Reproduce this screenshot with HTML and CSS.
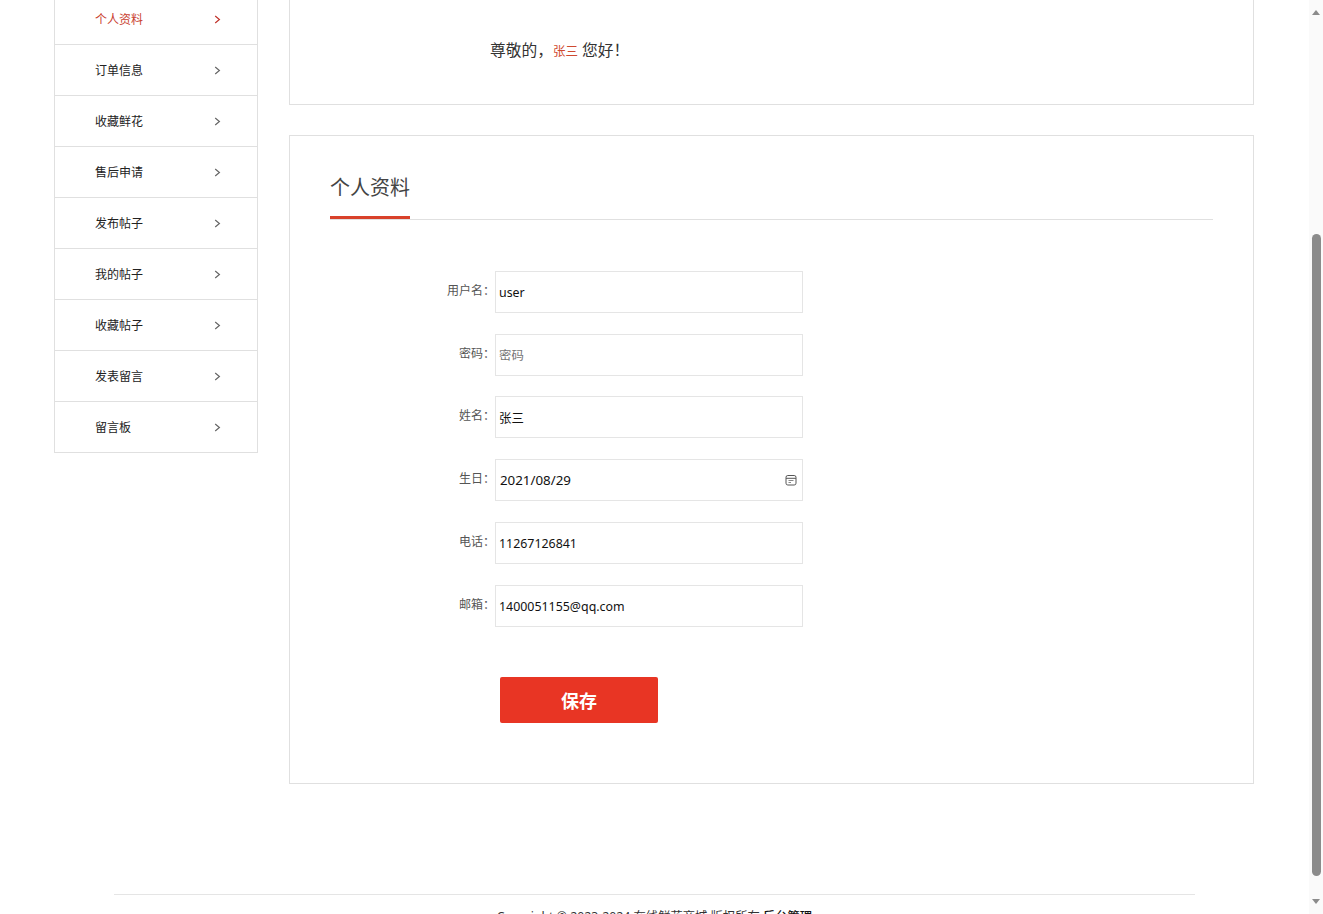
FILE: index.html
```html
<!DOCTYPE html>
<html lang="zh-CN">
<head>
<meta charset="utf-8">
<title>个人资料</title>
<link rel="stylesheet" href="styles.css">
</head>
<body>
<div class="page">
  <div class="layout">
    <nav class="side">
      <a class="side-item active"><span>个人资料</span><svg class="chev" width="7" height="9" viewBox="0 0 7 9"><path d="M1.2 1 L5.4 4.5 L1.2 8"/></svg></a>
      <a class="side-item"><span>订单信息</span><svg class="chev" width="7" height="9" viewBox="0 0 7 9"><path d="M1.2 1 L5.4 4.5 L1.2 8"/></svg></a>
      <a class="side-item"><span>收藏鲜花</span><svg class="chev" width="7" height="9" viewBox="0 0 7 9"><path d="M1.2 1 L5.4 4.5 L1.2 8"/></svg></a>
      <a class="side-item"><span>售后申请</span><svg class="chev" width="7" height="9" viewBox="0 0 7 9"><path d="M1.2 1 L5.4 4.5 L1.2 8"/></svg></a>
      <a class="side-item"><span>发布帖子</span><svg class="chev" width="7" height="9" viewBox="0 0 7 9"><path d="M1.2 1 L5.4 4.5 L1.2 8"/></svg></a>
      <a class="side-item"><span>我的帖子</span><svg class="chev" width="7" height="9" viewBox="0 0 7 9"><path d="M1.2 1 L5.4 4.5 L1.2 8"/></svg></a>
      <a class="side-item"><span>收藏帖子</span><svg class="chev" width="7" height="9" viewBox="0 0 7 9"><path d="M1.2 1 L5.4 4.5 L1.2 8"/></svg></a>
      <a class="side-item"><span>发表留言</span><svg class="chev" width="7" height="9" viewBox="0 0 7 9"><path d="M1.2 1 L5.4 4.5 L1.2 8"/></svg></a>
      <a class="side-item"><span>留言板</span><svg class="chev" width="7" height="9" viewBox="0 0 7 9"><path d="M1.2 1 L5.4 4.5 L1.2 8"/></svg></a>
    </nav>
    <main class="main">
      <section class="card greet">
        <p class="greet-text">尊敬的，<span class="greet-name">张三</span> 您好！</p>
      </section>
      <section class="card profile">
        <div class="tab-head"><h2 class="tab-title">个人资料</h2></div>
        <form class="form">
          <div class="row"><label class="label">用户名：</label><input class="field" type="text" value="user"></div>
          <div class="row"><label class="label">密码：</label><input class="field" type="password" placeholder="密码"></div>
          <div class="row"><label class="label">姓名：</label><input class="field" type="text" value="张三"></div>
          <div class="row"><label class="label">生日：</label>
            <div class="date-wrap">
              <input class="field field-date" type="text" value="2021/08/29">
              <svg class="cal" width="12" height="12" viewBox="0 0 12 12"><rect x="1" y="1.5" width="10" height="9.5" rx="1.8"/><path d="M1 4.3 H11"/><path class="cal-dots" d="M3.5 6.5 H8.5 M3.5 8.5 H6"/></svg>
            </div>
          </div>
          <div class="row"><label class="label">电话：</label><input class="field" type="text" value="11267126841"></div>
          <div class="row"><label class="label">邮箱：</label><input class="field" type="text" value="1400051155@qq.com"></div>
          <button class="save" type="button">保存</button>
        </form>
      </section>
    </main>
  </div>
  <footer class="footer">Copyright © 2023-2024 在线鲜花商城 版权所有 <a class="admin">后台管理</a></footer>
</div>
<div class="scrollbar">
  <span class="arrow-up"></span>
  <span class="thumb"></span>
  <span class="arrow-down"></span>
</div>
</body>
</html>
```
FILE: styles.css
```css
html, body {
  margin: 0;
  height: 100%;
  overflow: hidden;
  background: #fff;
}
body {
  font-family: "Noto Sans", "Noto Sans CJK SC", sans-serif;
  color: #333;
}
.page {
  width: 1309px;
  margin-top: -7px;
}
.layout {
  display: flex;
  align-items: flex-start;
  padding-left: 54px;
}
.side {
  width: 204px;
  box-sizing: border-box;
  border: 1px solid #e0e0e0;
  border-bottom: 0;
  flex: none;
}
.side-item {
  display: flex;
  align-items: center;
  justify-content: space-between;
  box-sizing: border-box;
  height: 51px;
  padding: 0 36px 0 40px;
  border-bottom: 1px solid #e0e0e0;
  font-size: 12px;
  color: #222;
}
.side-item.active {
  color: #c9402f;
}
.chev {
  fill: none;
  stroke: #666;
  stroke-width: 1.2;
}
.active .chev {
  stroke: #c0332b;
}
.main {
  width: 965px;
  margin-left: 31px;
  flex: none;
}
.card {
  box-sizing: border-box;
  border: 1px solid #e0e0e0;
}
.greet {
  height: 112px;
  padding: 43px 0 0 200px;
}
.greet-text {
  margin: 0;
  font-size: 15.75px;
  line-height: 26px;
  color: #333;
}
.greet-name {
  font-size: 12.5px;
  color: #cf4a30;
}
.profile {
  height: 649px;
  margin-top: 30px;
  padding: 0 40px;
}
.tab-head {
  display: flex;
  align-items: flex-start;
  height: 83px;
  border-bottom: 1px solid #e0e0e0;
}
.tab-title {
  width: 80px;
  height: 44px;
  margin: 0;
  padding-top: 36px;
  border-bottom: 3px solid #d9412b;
  font-size: 20px;
  font-weight: 400;
  line-height: 32px;
  color: #444;
}
.form {
  display: flex;
  flex-direction: column;
  gap: 20.8px;
  padding-top: 50.8px;
}
.row {
  display: flex;
  align-items: center;
  height: 42px;
  padding-left: 105px;
}
.label {
  width: 60px;
  text-align: right;
  font-size: 12px;
  color: #555;
  margin-top: -4px;
}
.field {
  box-sizing: border-box;
  width: 308px;
  height: 42px;
  margin: 0;
  padding: 2px 0 0 3px;
  border: 1px solid #e5e5e5;
  outline: 0;
  border-radius: 0;
  background: #fff;
  font-family: "Noto Sans", "Noto Sans CJK SC", sans-serif;
  font-size: 12.4px;
  color: #111;
}
.field::placeholder {
  color: #757575;
}
.date-wrap {
  position: relative;
  width: 308px;
  height: 42px;
}
.field-date {
  padding: 0 0 0 4px;
  font-size: 13.33px;
}
.cal {
  position: absolute;
  top: 15px;
  right: 6px;
  fill: none;
  stroke: #555;
  stroke-width: 1;
}
.cal-dots {
  stroke: #888;
}
.save {
  align-self: flex-start;
  width: 158px;
  height: 46px;
  margin: 29px 0 0 170px;
  border: 0;
  border-radius: 2px;
  background: #e83524;
  color: #fff;
  font-family: "Noto Sans CJK SC", sans-serif;
  font-size: 18px;
  font-weight: 700;
}
.footer {
  width: 1081px;
  margin: 110px auto 0;
  padding-top: 12px;
  border-top: 1px solid #e5e5e5;
  text-align: center;
  font-size: 12.3px;
  line-height: 20px;
  color: #333;
}
.admin {
  color: #111;
  font-weight: 500;
}
.scrollbar {
  position: fixed;
  top: 0;
  right: 0;
  bottom: 0;
  width: 14px;
  background: #fafafa;
}
.thumb {
  position: absolute;
  top: 234px;
  left: 3px;
  width: 9px;
  height: 642px;
  border-radius: 5px;
  background: #8b8b8b;
}
.arrow-up, .arrow-down {
  position: absolute;
  left: 3px;
  width: 0;
  height: 0;
  border-left: 4.5px solid transparent;
  border-right: 4.5px solid transparent;
}
.arrow-up {
  top: 10px;
  border-bottom: 5px solid #8b8b8b;
}
.arrow-down {
  top: 899px;
  border-top: 5px solid #8b8b8b;
}
```
